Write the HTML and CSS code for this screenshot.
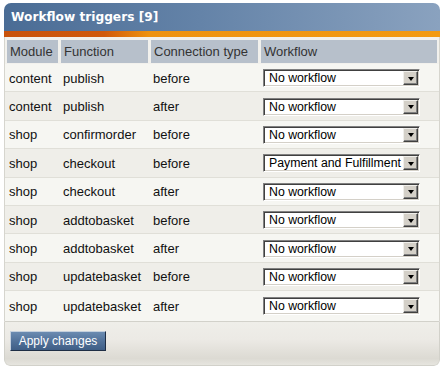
FILE: index.html
```html
<!DOCTYPE html>
<html>
<head>
<meta charset="utf-8">
<link rel="stylesheet" href="styles.css">
</head>
<body>
<div class="panel">
  <div class="title">Workflow triggers [9]</div>
  <div class="accent"></div>
  <div class="body">
    <div class="grid head">
      <div class="th">Module</div>
      <div class="th">Function</div>
      <div class="th">Connection type</div>
      <div class="th">Workflow</div>
    </div>
    <div class="grid row odd">
      <div class="td">content</div><div class="td">publish</div><div class="td">before</div>
      <div class="td"><div class="select"><span class="value">No workflow</span><span class="arrow"></span></div></div>
    </div>
    <div class="grid row even">
      <div class="td">content</div><div class="td">publish</div><div class="td">after</div>
      <div class="td"><div class="select"><span class="value">No workflow</span><span class="arrow"></span></div></div>
    </div>
    <div class="grid row odd">
      <div class="td">shop</div><div class="td">confirmorder</div><div class="td">before</div>
      <div class="td"><div class="select"><span class="value">No workflow</span><span class="arrow"></span></div></div>
    </div>
    <div class="grid row even">
      <div class="td">shop</div><div class="td">checkout</div><div class="td">before</div>
      <div class="td"><div class="select"><span class="value">Payment and Fulfillment</span><span class="arrow"></span></div></div>
    </div>
    <div class="grid row odd">
      <div class="td">shop</div><div class="td">checkout</div><div class="td">after</div>
      <div class="td"><div class="select"><span class="value">No workflow</span><span class="arrow"></span></div></div>
    </div>
    <div class="grid row even">
      <div class="td">shop</div><div class="td">addtobasket</div><div class="td">before</div>
      <div class="td"><div class="select"><span class="value">No workflow</span><span class="arrow"></span></div></div>
    </div>
    <div class="grid row odd">
      <div class="td">shop</div><div class="td">addtobasket</div><div class="td">after</div>
      <div class="td"><div class="select"><span class="value">No workflow</span><span class="arrow"></span></div></div>
    </div>
    <div class="grid row even">
      <div class="td">shop</div><div class="td">updatebasket</div><div class="td">before</div>
      <div class="td"><div class="select"><span class="value">No workflow</span><span class="arrow"></span></div></div>
    </div>
    <div class="grid row odd last">
      <div class="td">shop</div><div class="td">updatebasket</div><div class="td">after</div>
      <div class="td"><div class="select"><span class="value">No workflow</span><span class="arrow"></span></div></div>
    </div>
  </div>
  <div class="footer">
    <button class="btn">Apply changes</button>
  </div>
</div>
</body>
</html>
```

FILE: styles.css
```css
html, body {
  margin: 0;
  padding: 0;
  background: #ffffff;
}

body {
  font-family: "Liberation Sans", Arial, sans-serif;
  font-size: 13px;
  color: #111;
}

.panel {
  box-sizing: border-box;
  width: 436px;
  margin: 3px 0 0 4px;
  border-radius: 7px 7px 6px 6px;
  overflow: hidden;
}

.title {
  height: 28px;
  line-height: 29px;
  padding-left: 7px;
  font-family: "DejaVu Sans", Verdana, sans-serif;
  font-weight: bold;
  font-size: 12.2px;
  color: #fff;
  background: linear-gradient(to right, #4a6c95 0%, #6483a8 45%, #8aa2bf 100%);
}

.accent {
  height: 6px;
  background: linear-gradient(to right, #c8520b 0px, #d0590c 100px, #ee920f 145px, #f29a12 100%);
}

.body {
  border-left: 1px solid #d6d5ce;
  border-right: 1px solid #d6d5ce;
  background: #f2f1ed;
  padding-top: 3px;
}

.grid {
  display: grid;
  grid-template-columns: 51px 87px 107px 176px;
  column-gap: 3px;
  padding-left: 2px;
}

.head {
  height: 23px;
  margin-bottom: 1px;
}

.th {
  background: #b7c0cb;
  color: #333;
  padding-left: 3px;
  line-height: 23px;
  white-space: nowrap;
}

.row {
  box-sizing: border-box;
  height: 28.4px;
  align-items: center;
  border-bottom: 1px solid #e0dfd8;
  padding-top: 1px;
}

.row.odd { background: #f6f6f2; }
.row.even { background: #efeee9; }
.row.last { border-bottom: none; height: 30px; padding-top: 0; }

.td {
  padding-left: 2px;
  white-space: nowrap;
}

.select {
  box-sizing: border-box;
  width: 157px;
  height: 18px;
  display: flex;
  align-items: center;
  background: #fff;
  border: 1px solid;
  border-color: #808080 #ffffff #ffffff #808080;
  box-shadow: inset 1px 1px 0 #404040, inset -1px -1px 0 #d4d0c8;
  padding: 0 1px 0 5px;
}

.value {
  flex: 1;
  min-width: 0;
  white-space: nowrap;
  color: #000;
  font-size: 12.3px;
  line-height: 14px;
}

.arrow {
  box-sizing: border-box;
  flex: none;
  width: 15px;
  height: 14px;
  background: #d4d0c8;
  border: 1px solid;
  border-color: #f0efeb #404040 #404040 #f0efeb;
  box-shadow: inset -1px -1px 0 #808080;
  display: flex;
  align-items: center;
  justify-content: center;
}

.arrow::after {
  content: "";
  width: 0;
  height: 0;
  border-left: 3.5px solid transparent;
  border-right: 3.5px solid transparent;
  border-top: 4px solid #000;
  margin-top: 1px;
}

.footer {
  box-sizing: border-box;
  height: 45px;
  border: 1px solid #d2d1ca;
  border-radius: 0 0 6px 6px;
  background: linear-gradient(to bottom, #efeee9 0%, #eceae5 40%, #dcdad3 85%, #e6e5df 100%);
  padding: 9px 0 0 5px;
}

.btn {
  box-sizing: border-box;
  width: 96px;
  height: 20px;
  margin: 0;
  padding: 0 0 1px 0;
  font-family: "Liberation Sans", Arial, sans-serif;
  font-size: 12px;
  color: #fff;
  text-align: center;
  background: linear-gradient(to bottom, #6b8bb1 0%, #52729a 50%, #3f5e86 100%);
  border: 1px solid;
  border-color: #c5d0dd #1e2d44 #1e2d44 #c5d0dd;
  border-radius: 0;
}
```
